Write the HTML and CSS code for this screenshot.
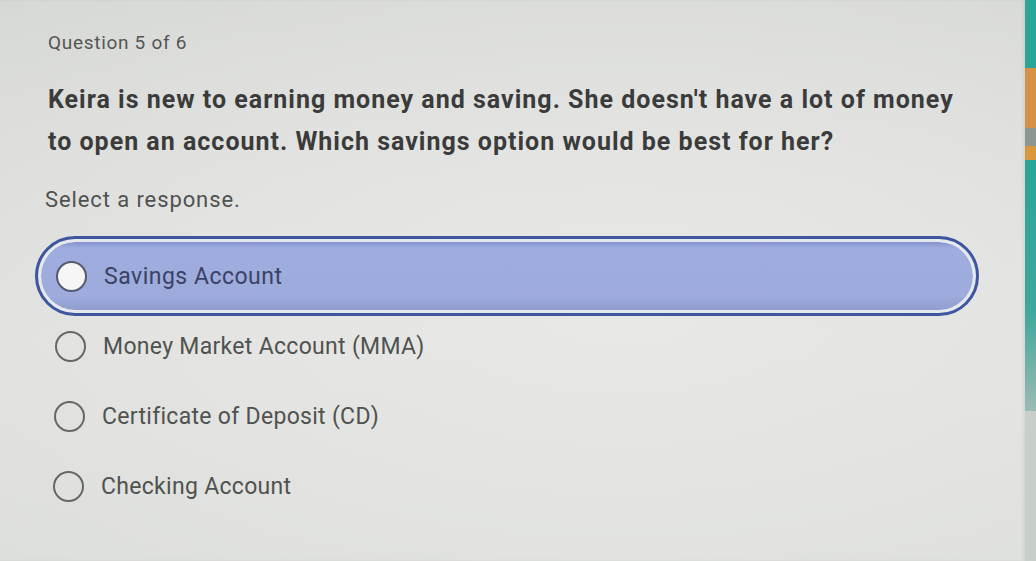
FILE: index.html
```html
<!DOCTYPE html>
<html lang="en">
<head>
<meta charset="utf-8">
<title>Question 5 of 6</title>
<link rel="stylesheet" href="styles.css">
</head>
<body>
<div class="screen">
  <main class="panel">
    <div class="counter">Question 5 of 6</div>
    <h1 class="question">Keira is new to earning money and saving. She doesn't have a lot of money to open an account. Which savings option would be best for her?</h1>
    <div class="prompt">Select a response.</div>
    <ul class="options">
      <li class="option selected"><span class="radio"></span><span class="label">Savings Account</span></li>
      <li class="option"><span class="radio"></span><span class="label">Money Market Account (MMA)</span></li>
      <li class="option"><span class="radio"></span><span class="label">Certificate of Deposit (CD)</span></li>
      <li class="option"><span class="radio"></span><span class="label">Checking Account</span></li>
    </ul>
  </main>
  <aside class="edge">
    <div class="edge-orange"></div>
    <div class="edge-gray"></div>
    <div class="edge-orange2"></div>
    <div class="edge-teal"></div>
    <div class="edge-fade"></div>
  </aside>
</div>
</body>
</html>
```
FILE: styles.css
```css
html, body {
  margin: 0;
  padding: 0;
  height: 100%;
}
body {
  font-family: Roboto, "Liberation Sans", sans-serif;
  background: #d9dbd8;
  overflow: hidden;
}
.screen {
  display: flex;
  height: 561px;
  width: 1036px;
}
.panel {
  flex: 1;
  padding: 31px 0 0 48px;
  background:
    radial-gradient(ellipse 900px 420px at 620px 300px, #e8e9e6 0%, rgba(232,233,230,0) 100%),
    linear-gradient(180deg, #d6d8d5 0%, #dfe0dd 60%, #dcdedb 100%);
  box-shadow: inset -2px 0 3px rgba(0,0,0,0.06);
}
.counter {
  font-size: 19px;
  line-height: 24px;
  color: #545654;
  letter-spacing: 0.7px;
}
.question {
  margin: 24px 0 0 0;
  font-size: 25px;
  line-height: 42px;
  font-weight: 700;
  color: #3a3b3a;
  width: 925px;
  letter-spacing: 1px;
}
.prompt {
  margin: 23px 0 0 -3px;
  font-size: 22px;
  line-height: 28px;
  color: #4f5150;
  letter-spacing: 0.9px;
}
.options {
  list-style: none;
  margin: 27px 0 0 -13px;
  padding: 0;
  display: flex;
  flex-direction: column;
}
.option {
  display: flex;
  align-items: center;
  height: 70px;
  padding-left: 20px;
  gap: 17px;
  font-size: 23px;
  letter-spacing: 0.3px;
  color: #505250;
}
.option.selected {
  height: 80px;
  margin-bottom: -5px;
  margin-top: -5px;
  width: 944px;
  box-sizing: border-box;
  border: 3px solid #3e56a0;
  border-radius: 40px;
  padding: 3px;
  background:
    linear-gradient(180deg, #8493cc 0px, #9eacdf 6px, #9eabdc 80%, #8f9ecf 100%) content-box;
  box-shadow: inset 0 0 0 3px #e6e8ee;
}
.option.selected .radio {
  margin-left: 15px;
  background: #f6f6f6;
  border-color: #555a6e;
}
.option.selected .label {
  color: #3b4263;
  letter-spacing: 0.5px;
}
.radio {
  width: 27px;
  height: 27px;
  border: 2px solid #666866;
  border-radius: 50%;
  flex: none;
}
.option:nth-child(3) { padding-left: 19px; }
.option:nth-child(4) { padding-left: 18px; }
.edge {
  width: 11px;
  flex: none;
  display: flex;
  flex-direction: column;
  background: #2aa597;
}
.edge-orange { height: 60px; margin-top: 68px; background: #d39248; }
.edge-gray { height: 18px; background: #8f9890; }
.edge-orange2 { height: 14px; background: #d8983f; }
.edge-teal { flex: 1; background: linear-gradient(180deg, #2aa597 0%, #3fa79c 60%, #9cbab4 100%); }
.edge-fade { height: 150px; background: #c8cfcb; }
```
